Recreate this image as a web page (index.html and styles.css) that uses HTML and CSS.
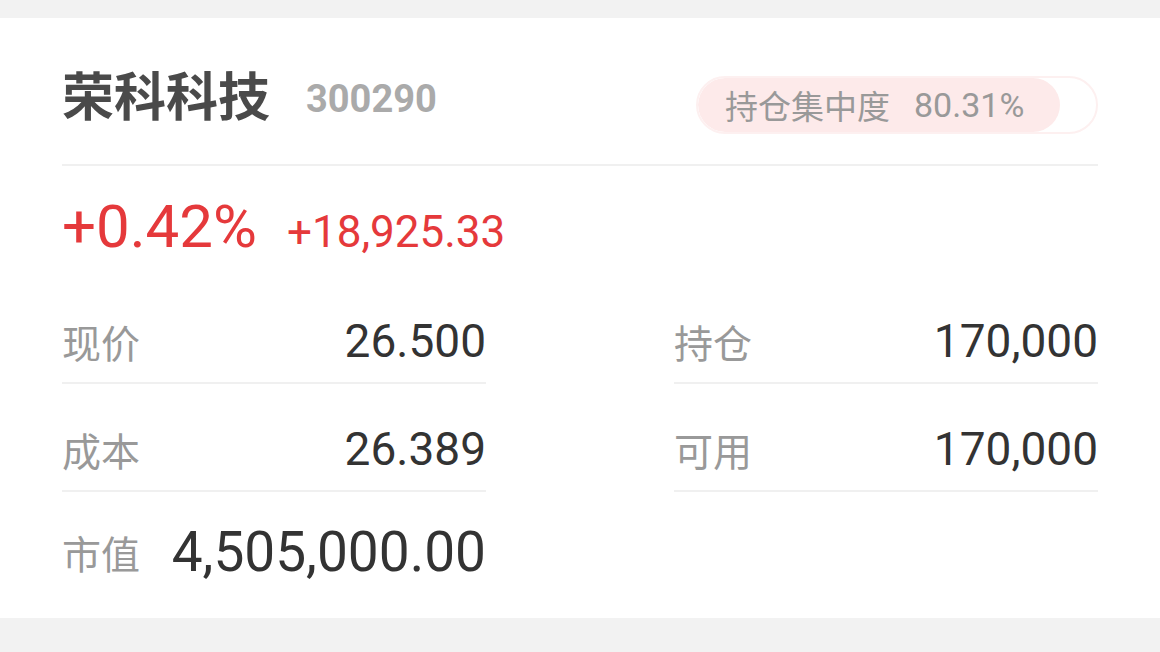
FILE: index.html
```html
<!DOCTYPE html>
<html lang="zh-CN">
<head>
    <meta charset="UTF-8">
    <meta name="viewport" content="width=device-width, initial-scale=1.0">
    <title>荣科科技 持仓</title>
    <link rel="stylesheet" href="styles.css">
</head>
<body>
    <div class="card">
        <div class="head">
            <div class="name">荣科科技</div>
            <div class="code">300290</div>
            <div class="conc">
                <div class="conc-fill" style="width: 91%;"></div>
                <div class="conc-text"><span class="conc-label">持仓集中度</span><span class="conc-num">80.31%</span></div>
            </div>
        </div>

        <div class="change">
            <span class="pct">+0.42%</span>
            <span class="amt">+18,925.33</span>
        </div>

        <div class="grid">
            <div class="row">
                <span class="label">现价</span>
                <span class="val">26.500</span>
            </div>
            <div class="row">
                <span class="label">持仓</span>
                <span class="val">170,000</span>
            </div>
            <div class="row">
                <span class="label">成本</span>
                <span class="val">26.389</span>
            </div>
            <div class="row">
                <span class="label">可用</span>
                <span class="val">170,000</span>
            </div>
            <div class="row last">
                <span class="label">市值</span>
                <span class="val big">4,505,000.00</span>
            </div>
        </div>
    </div>
</body>
</html>
```

FILE: styles.css
```css
body {
    font-family: Roboto, "Noto Sans CJK SC", sans-serif;
    background: #f2f2f2;
    margin: 0;
    padding: 18px 0 34px;
}
.card {
    background: #fff;
    padding: 0 62px 18px;
}

/* header */
.head {
    display: flex;
    align-items: center;
    height: 148px;
    box-sizing: border-box;
    padding-top: 16px;
    border-bottom: 2px solid #f0f0f0;
}
.name {
    font-size: 52px;
    font-weight: bold;
    color: #4a4a4a;
    line-height: 1;
}
.code {
    font-size: 38px;
    font-weight: bold;
    color: #aaa;
    margin-left: 36px;
    line-height: 1;
}
.conc {
    position: relative;
    margin-left: auto;
    margin-top: 12px;
    width: 402px;
    height: 58px;
    box-sizing: border-box;
    border: 2px solid #fdf0f0;
    border-radius: 29px;
    overflow: hidden;
}
.conc-fill {
    position: absolute;
    left: 0;
    top: 0;
    bottom: 0;
    background: #fdeaea;
    border-radius: 29px;
}
.conc-text {
    position: relative;
    display: flex;
    align-items: center;
    height: 100%;
    padding-left: 27px;
    color: #999;
    font-size: 33px;
}
.conc-num {
    margin-left: 24px;
    font-size: 34px;
}

/* change */
.change {
    display: flex;
    align-items: baseline;
    height: 110px;
    box-sizing: border-box;
    padding-top: 61px;
    color: #e5393b;
}
.pct {
    font-size: 60px;
    line-height: 0;
}
.amt {
    font-size: 44px;
    margin-left: 30px;
    line-height: 0;
}

/* detail rows */
.grid {
    display: grid;
    grid-template-columns: 424px 424px;
    justify-content: space-between;
}
.row {
    display: flex;
    align-items: center;
    justify-content: space-between;
    height: 108px;
    box-sizing: border-box;
    padding-top: 24px;
    border-bottom: 2px solid #f0f0f0;
}
.row.last {
    padding-top: 12px;
    border-bottom: none;
}
.label {
    font-size: 39px;
    color: #999;
}
.val {
    font-size: 46px;
    color: #333;
}
.val.big {
    font-size: 55px;
}
```
